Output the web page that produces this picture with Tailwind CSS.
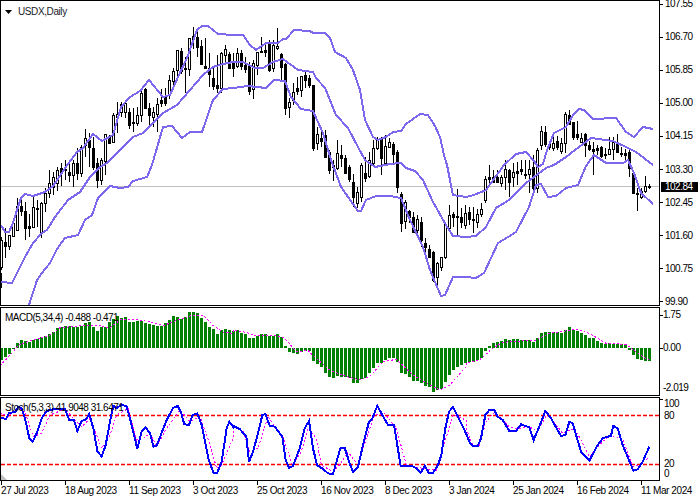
<!DOCTYPE html>
<html lang="en">
  <head>
    <meta charset="UTF-8" />
    <title>USDX, Daily</title>
    <script src="https://cdn.jsdelivr.net/npm/@tailwindcss/browser@4"></script>
  </head>
  <body class="bg-white">
    <div class="w-[700px] h-[500px] overflow-hidden bg-white text-black text-[10px] leading-[12px] tracking-[-0.5px] font-['Liberation_Sans',sans-serif]">
      <!-- Price chart -->
      <div class="flex h-[306px]">
        <div class="relative w-[660px] h-[306px] border border-black">
          <svg id="price" class="block w-full h-full" viewBox="1 1 658 304"></svg>
          <div class="absolute left-[4px] top-[5px] flex items-center gap-[6px]">
            <svg class="w-[7px] h-[4px]" viewBox="0 0 7 4"><path d="M0 0h7L3.5 4z" fill="#000" /></svg>
            <span class="text-[#1a1a2a] tracking-[-0.4px]">USDX,Daily</span>
          </div>
        </div>
        <div class="relative w-[40px] h-[306px] flex flex-col justify-between leading-[8px]">
          <div class="flex items-center h-[8px]"><i class="w-[3px] h-px bg-black"></i><span class="ml-[2px]">107.55</span></div>
          <div class="flex items-center h-[8px]"><i class="w-[3px] h-px bg-black"></i><span class="ml-[2px]">106.70</span></div>
          <div class="flex items-center h-[8px]"><i class="w-[3px] h-px bg-black"></i><span class="ml-[2px]">105.85</span></div>
          <div class="flex items-center h-[8px]"><i class="w-[3px] h-px bg-black"></i><span class="ml-[2px]">105.00</span></div>
          <div class="flex items-center h-[8px]"><i class="w-[3px] h-px bg-black"></i><span class="ml-[2px]">104.15</span></div>
          <div class="flex items-center h-[8px]"><i class="w-[3px] h-px bg-black"></i><span class="ml-[2px]">103.30</span></div>
          <div class="flex items-center h-[8px]"><i class="w-[3px] h-px bg-black"></i><span class="ml-[2px]">102.45</span></div>
          <div class="flex items-center h-[8px]"><i class="w-[3px] h-px bg-black"></i><span class="ml-[2px]">101.60</span></div>
          <div class="flex items-center h-[8px]"><i class="w-[3px] h-px bg-black"></i><span class="ml-[2px]">100.75</span></div>
          <div class="flex items-center h-[8px]"><i class="w-[3px] h-px bg-black"></i><span class="ml-[2px]">99.90</span></div>
          <!-- Current price tag -->
          <div class="absolute left-[1px] top-[182px] w-[37px] h-[10px] bg-black text-white leading-[10px] pl-[4px]">102.84</div>
        </div>
      </div>

      <!-- MACD -->
      <div class="flex h-[89px] mt-px">
        <div class="relative w-[660px] h-[89px] border border-black">
          <svg id="macd" class="block w-full h-full" viewBox="1 308 658 87"></svg>
          <span class="absolute left-[4px] top-[4px]">MACD(5,34,4) -0.488 -0.471</span>
        </div>
        <div class="relative w-[40px]">
          <div class="absolute left-0 top-[2px] flex items-center h-[12px]"><i class="w-[3px] h-px bg-black"></i><span>1.75</span></div>
          <div class="absolute left-0 top-[35px] flex items-center h-[12px]"><i class="w-[3px] h-px bg-black"></i><span>0.00</span></div>
          <span class="absolute left-[3px] top-[75px]">-2.019</span>
        </div>
      </div>

      <!-- Stochastic -->
      <div class="flex h-[84px] mt-px">
        <div class="relative w-[660px] h-[84px] border border-black">
          <svg id="stoch" class="block w-full h-full" viewBox="1 398 658 82"></svg>
          <span class="absolute left-[4px] top-[4px]">Stoch(5,3,3) 41.9048 31.6471</span>
        </div>
        <div class="relative w-[40px]">
          <i class="absolute left-0 top-[2px] w-[3px] h-px bg-black"></i>
          <span class="absolute left-[4px] top-[1px]">100</span>
          <span class="absolute left-[4px] top-[13px]">80</span>
          <span class="absolute left-[4px] top-[61px]">20</span>
          <span class="absolute left-[4px] top-[71px]">0</span>
        </div>
      </div>

      <!-- Time axis -->
      <div class="flex pl-px whitespace-nowrap tracking-[-0.4px]">
        <div class="w-[64px]"><div class="w-px h-[4px] bg-black"></div><span>27 Jul 2023</span></div>
        <div class="w-[64px]"><div class="w-px h-[4px] bg-black"></div><span>18 Aug 2023</span></div>
        <div class="w-[64px]"><div class="w-px h-[4px] bg-black"></div><span>11 Sep 2023</span></div>
        <div class="w-[64px]"><div class="w-px h-[4px] bg-black"></div><span>3 Oct 2023</span></div>
        <div class="w-[64px]"><div class="w-px h-[4px] bg-black"></div><span>25 Oct 2023</span></div>
        <div class="w-[64px]"><div class="w-px h-[4px] bg-black"></div><span>16 Nov 2023</span></div>
        <div class="w-[64px]"><div class="w-px h-[4px] bg-black"></div><span>8 Dec 2023</span></div>
        <div class="w-[64px]"><div class="w-px h-[4px] bg-black"></div><span>3 Jan 2024</span></div>
        <div class="w-[64px]"><div class="w-px h-[4px] bg-black"></div><span>25 Jan 2024</span></div>
        <div class="w-[64px]"><div class="w-px h-[4px] bg-black"></div><span>16 Feb 2024</span></div>
        <div class="w-[59px]"><div class="w-px h-[4px] bg-black"></div><span>11 Mar 2024</span></div>
      </div>
    </div>

    <script>
      // wickTop, wickBottom, bodyTop, bodyBottom, black (1) or white (0)
      const candles = [
        [237,270,240,267,0],[228,258,242,246,1],[235,250,235,246,0],[222,237,223,236,0],[198,230,206,230,0],[197,216,206,211,1],[202,240,211,228,1],[214,237,226,228,1],
        [197,227,207,227,0],[200,227,208,209,1],[202,238,203,232,0],[188,212,193,203,0],[170,198,183,193,0],[172,195,177,187,0],[167,191,170,183,0],[163,186,168,172,1],
        [160,180,169,170,1],[160,182,172,175,1],[160,187,163,175,0],[148,180,163,173,1],[145,177,147,173,0],[129,157,138,145,0],[133,167,140,147,1],[137,170,148,167,1],
        [158,188,163,180,1],[158,185,160,180,0],[134,175,134,161,0],[135,143,136,143,1],[113,143,115,142,0],[102,133,114,117,0],[102,117,104,112,0],[101,118,103,112,0],
        [108,129,112,125,1],[108,132,122,123,1],[107,126,115,123,0],[90,122,93,115,0],[88,109,89,108,1],[103,125,108,115,1],[107,127,112,117,0],[98,132,104,114,0],
        [89,107,100,103,1],[88,106,97,103,1],[75,99,80,95,0],[68,85,71,81,0],[50,77,50,70,0],[48,74,51,71,1],[57,93,68,69,1],[38,76,38,69,0],
        [27,49,36,39,0],[29,57,37,47,1],[40,65,46,64,1],[38,68,66,68,1],[53,87,68,74,1],[68,90,78,86,1],[55,93,85,88,1],[52,93,53,88,0],
        [45,62,49,55,0],[52,68,54,68,1],[53,77,63,68,1],[48,68,53,66,0],[50,70,53,66,1],[57,73,65,69,1],[62,95,66,91,1],[60,99,63,89,0],
        [52,75,52,65,0],[37,53,51,52,1],[42,57,50,52,1],[40,72,43,70,1],[40,72,45,68,0],[28,50,46,48,0],[53,80,54,67,1],[63,115,64,108,1],
        [98,118,102,107,0],[83,105,92,100,0],[77,95,88,91,1],[76,97,76,90,0],[72,88,75,80,1],[75,88,78,85,1],[85,151,85,148,1],[127,150,134,143,0],
        [127,147,138,141,1],[130,157,135,157,1],[150,174,152,170,1],[160,181,165,167,1],[140,170,153,168,0],[145,167,155,158,1],[155,173,158,173,1],[165,182,167,179,1],
        [174,207,182,197,1],[187,208,192,203,0],[163,202,165,197,0],[157,182,173,178,1],[152,178,160,176,0],[140,165,148,163,0],[137,150,140,148,0],[137,175,139,158,1],
        [135,165,146,163,0],[138,148,142,147,0],[142,163,144,154,1],[150,193,152,187,1],[192,232,194,223,1],[200,229,202,221,0],[210,223,211,217,1],[212,233,217,232,1],
        [215,235,219,230,0],[217,247,222,240,1],[238,252,243,247,1],[245,258,249,257,1],[251,282,252,280,1],[262,285,263,277,0],[257,271,257,267,0],[223,259,224,257,0],
        [205,230,215,228,0],[212,227,214,217,1],[189,237,216,217,1],[208,228,217,222,1],[205,229,213,225,0],[207,225,212,219,1],[207,233,219,220,1],[209,228,214,222,0],
        [203,217,209,214,0],[176,203,179,200,0],[165,183,177,179,1],[170,183,177,182,1],[170,183,177,182,1],[175,187,177,183,0],[160,190,169,177,0],[169,197,170,182,1],
        [163,187,172,177,0],[162,185,171,173,1],[160,175,169,171,1],[160,179,174,175,1],[160,193,169,174,0],[155,193,167,188,1],[148,193,150,188,0],[126,150,131,145,0],
        [126,147,132,144,1],[142,150,144,147,1],[133,151,143,148,0],[136,150,141,147,1],[138,154,143,151,0],[112,153,114,143,0],[110,124,115,124,1],[122,140,122,137,1],
        [121,140,134,137,1],[133,143,138,142,0],[133,157,134,145,1],[141,151,145,149,1],[142,175,149,151,1],[145,155,148,150,1],[146,158,147,156,1],[148,159,154,155,1],
        [137,155,149,154,0],[137,160,142,149,0],[134,153,143,152,1],[147,157,153,154,1],[149,163,153,155,1],[150,177,152,168,1],[170,193,173,193,1],[188,211,193,194,1],
        [188,199,191,197,0],[176,193,186,191,0],[184,189,186,187,1]
      ];

      const upper = [1,225,5,232,9,232,13,223,17,210,21,198,25,194,33,196,45,192,53,186,68,164,77,152,83,148,93,134,102,141,113,135,121,107,130,97,140,91,149,80,163,97,170,95,178,77,187,58,197,30,202,26,208,26,218,34,233,35,243,35,250,45,256,50,266,43,278,43,283,39,286,39,294,30,310,31,313,33,325,33,330,38,335,52,346,58,353,70,360,90,365,120,373,137,378,140,386,137,393,132,401,131,406,124,420,114,428,115,435,126,440,137,444,155,447,165,450,180,453,195,466,197,474,195,486,190,504,165,516,154,526,152,534,161,538,167,543,164,547,150,554,133,566,127,573,115,579,109,584,110,593,119,616,118,626,132,634,137,643,127,653,129];
      const middle = [1,282,12,283,17,273,25,257,33,243,42,233,47,230,55,217,68,200,80,192,90,177,100,167,107,163,122,148,133,137,143,133,163,113,177,105,190,90,203,75,213,67,223,64,233,62,243,62,255,68,263,68,273,62,283,59,298,70,313,72,316,78,325,88,336,115,348,128,358,147,365,160,375,167,390,164,401,163,406,168,415,171,423,180,433,202,446,225,453,236,466,237,476,236,486,227,496,208,509,200,526,183,546,168,554,165,566,157,579,147,591,138,613,141,626,147,636,152,653,165];
      const lower = [29,305,37,280,42,273,50,263,57,249,65,238,78,235,85,220,92,215,98,198,110,186,120,188,128,187,133,181,147,177,152,165,163,127,172,126,182,138,190,132,202,132,213,100,223,89,233,88,248,86,266,88,274,80,285,81,291,97,301,109,313,111,323,133,331,160,341,187,358,211,361,211,366,200,376,196,390,196,401,198,410,220,423,247,430,270,435,282,441,296,445,295,453,277,466,277,476,278,484,273,498,243,508,237,516,232,529,207,536,185,541,184,548,197,556,196,566,188,578,185,586,166,594,155,606,163,623,163,628,160,634,173,641,193,653,204];

      // MACD bar tops, y = 305 + v / 3
      const hist = [165,155,148,130,113,105,107,110,105,102,96,92,88,80,70,65,63,64,65,65,62,53,50,65,78,65,65,50,42,33,40,37,50,52,47,48,55,58,60,62,62,55,45,33,37,42,36,22,20,25,40,50,65,73,87,75,72,75,78,75,85,87,100,98,92,88,87,93,92,87,97,123,140,143,147,140,137,137,167,178,187,203,215,220,213,215,217,220,233,233,222,218,205,190,175,173,165,160,160,172,203,207,215,227,227,233,242,247,260,255,252,230,210,195,185,180,175,172,172,165,160,137,123,113,110,107,102,104,103,102,104,105,105,110,100,85,81,81,81,81,84,75,66,75,78,85,90,99,100,107,114,118,115,116,116,117,117,134,150,162,164,167,167];

      // lines read off in three sections of the chart, at 3x scale
      function trace(y0, a, b, c) {
        let p = [];
        [[0, a], [233, b], [466, c]].forEach(function (s) {
          for (let i = 0; i < s[1].length; i += 2) p.push(s[0] + s[1][i] / 3, y0 + s[1][i + 1] / 3);
        });
        return p;
      }
      function line(p, attrs) {
        return '<polyline fill="none" shape-rendering="crispEdges" points="' + p.join(" ") + '" ' + attrs + " />";
      }

      const macdSignal = trace(305,
        [0,182,40,140,55,120,100,105,150,90,180,68,250,62,285,60,330,68,360,45,400,42,445,50,490,62,520,50,580,30,610,30,640,62,670,82,699,85],
        [0,75,40,82,70,93,130,92,155,100,190,140,225,137,250,160,290,195,340,215,380,225,410,215,450,170,490,163,540,210,590,240,620,255,650,240,699,185],
        [0,175,40,165,80,130,110,112,210,105,250,85,330,73,370,85,420,115,480,118,530,155,550,165]);

      const stochMain = trace(305,
        [0,338,18,342,28,323,45,322,55,305,65,310,75,340,88,400,98,410,110,385,125,340,140,318,160,313,195,312,208,345,222,345,232,378,245,348,258,343,268,327,280,370,292,438,305,455,317,420,330,350,340,302,350,310,365,298,380,305,390,340,412,432,425,380,437,367,450,385,460,425,470,422,500,345,520,308,533,303,543,322,553,358,567,360,578,330,592,325,605,360,625,460,640,503,652,503,665,470,680,370,688,350,699,365],
        [0,362,20,372,40,395,48,470,60,440,75,385,88,330,97,327,110,362,125,365,148,395,158,465,168,488,180,483,200,430,215,370,228,348,240,430,252,480,270,492,285,505,300,507,322,430,335,428,350,475,360,500,375,485,390,420,408,350,418,340,433,302,445,325,465,360,483,360,503,482,535,482,550,490,563,503,575,483,587,503,600,503,615,480,625,450,637,370,648,320,660,306,675,335,699,385],
        [0,385,10,410,20,423,35,423,45,400,58,330,70,315,85,315,95,335,110,345,130,378,150,378,165,358,190,367,203,405,220,365,238,318,255,340,285,393,298,390,310,350,320,355,345,440,370,467,395,420,410,400,435,392,442,363,455,370,470,420,502,497,515,493,530,470,550,425]);

      const stochSignal = trace(305,
        [0,322,25,335,50,310,75,320,100,395,125,385,150,330,195,312,225,345,245,365,270,340,305,430,330,390,350,330,385,310,410,405,430,400,450,385,470,425,500,370,540,315,570,350,600,335,630,420,650,490,665,480,699,400],
        [0,360,30,378,50,440,75,430,105,335,130,370,150,395,178,480,205,440,225,370,250,400,265,480,300,500,320,480,345,440,375,480,400,400,425,330,455,325,490,370,520,480,570,490,610,495,630,430,660,330,699,345],
        [0,370,20,420,40,420,60,350,85,322,130,365,150,372,190,365,215,380,245,325,290,385,325,370,345,405,370,455,400,420,430,390,470,400,500,485,520,480,545,460]);

      let out = '<rect x="1" y="186" width="658" height="1" fill="#c0c0c0" />';
      out += '<rect x="1" y="273" width="1" height="15" fill="#000" />';
      candles.forEach(function (c, i) {
        const x = 4 * i;
        out += '<rect x="' + (x + 1) + '" y="' + c[0] + '" width="1" height="' + (c[1] - c[0]) + '" fill="#000" />';
        const h = c[3] - c[2] + 1;
        out += '<rect x="' + x + '" y="' + c[2] + '" width="3" height="' + h + '" fill="#000" />';
        if (!c[4] && h > 2) out += '<rect x="' + (x + 1) + '" y="' + (c[2] + 1) + '" width="1" height="' + (h - 2) + '" fill="#fff" />';
      });
      [upper, middle, lower].forEach(function (b) {
        out += line(b, 'stroke="#7b68ee" stroke-width="2"');
      });
      document.getElementById("price").innerHTML = out;

      out = "";
      hist.forEach(function (v, i) {
        const y = Math.round(305 + v / 3);
        const top = Math.min(y, 348), h = Math.max(Math.abs(y - 348), 1);
        out += '<rect x="' + 4 * i + '" y="' + top + '" width="3" height="' + h + '" fill="#008000" />';
      });
      out += line(macdSignal, 'stroke="#ff00ff" stroke-width="1" stroke-dasharray="2 2"');
      document.getElementById("macd").innerHTML = out;

      out = '<path d="M1 474v6h6z" fill="#c0c0c0" />';
      out += '<path d="M1 415.5H659M1 464.5H659" stroke="#ff0000" stroke-width="1.5" stroke-dasharray="4 2" fill="none" />';
      out += line(stochSignal, 'stroke="#ff00ff" stroke-width="1" stroke-dasharray="2 2"');
      out += line(stochMain, 'stroke="#0000ff" stroke-width="2"');
      document.getElementById("stoch").innerHTML = out;
    </script>
  </body>
</html>
